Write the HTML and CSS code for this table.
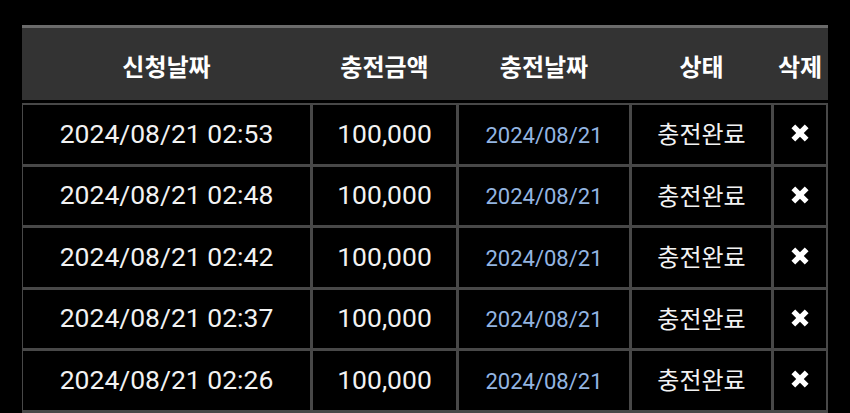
FILE: index.html
```html
<!DOCTYPE html>
<html lang="ko">

<head>
  <meta charset="UTF-8">
  <title>충전내역</title>
  <link rel="stylesheet" href="styles.css">
</head>

<body>
  <div class="history">
    <div class="cols head">
      <div>신청날짜</div>
      <div>충전금액</div>
      <div>충전날짜</div>
      <div>상태</div>
      <div>삭제</div>
    </div>

    <div class="list">
      <div class="cols row">
        <div>2024/08/21 02:53</div>
        <div>100,000</div>
        <div class="done-date">2024/08/21</div>
        <div class="state">충전완료</div>
        <div class="del"><svg viewBox="0 0 18 18"><path d="M3 3L15 15M15 3L3 15" /></svg></div>
      </div>
      <div class="cols row">
        <div>2024/08/21 02:48</div>
        <div>100,000</div>
        <div class="done-date">2024/08/21</div>
        <div class="state">충전완료</div>
        <div class="del"><svg viewBox="0 0 18 18"><path d="M3 3L15 15M15 3L3 15" /></svg></div>
      </div>
      <div class="cols row">
        <div>2024/08/21 02:42</div>
        <div>100,000</div>
        <div class="done-date">2024/08/21</div>
        <div class="state">충전완료</div>
        <div class="del"><svg viewBox="0 0 18 18"><path d="M3 3L15 15M15 3L3 15" /></svg></div>
      </div>
      <div class="cols row">
        <div>2024/08/21 02:37</div>
        <div>100,000</div>
        <div class="done-date">2024/08/21</div>
        <div class="state">충전완료</div>
        <div class="del"><svg viewBox="0 0 18 18"><path d="M3 3L15 15M15 3L3 15" /></svg></div>
      </div>
      <div class="cols row">
        <div>2024/08/21 02:26</div>
        <div>100,000</div>
        <div class="done-date">2024/08/21</div>
        <div class="state">충전완료</div>
        <div class="del"><svg viewBox="0 0 18 18"><path d="M3 3L15 15M15 3L3 15" /></svg></div>
      </div>
    </div>
  </div>
</body>

</html>
```
FILE: styles.css
```css
html {
  overflow: hidden;
  background: #000;
}

body {
  margin: 0;
  background: #000;
  color: #f2f2f2;
  font-family: Roboto, "Noto Sans CJK KR", sans-serif;
}

.history {
  width: 806px;
  margin: 25px 0 0 22px;
}

/* same columns for the header and every row */
.cols {
  display: grid;
  grid-template-columns: 287px 143px 170px 139px 52px;
  column-gap: 3px;
  padding: 0 2px 0 1px;
}

.head {
  height: 72px;
  border-top: 3px solid #6b6b6b;
  background: #333;
  font-family: "Noto Sans CJK KR", sans-serif;
  font-size: 24px;
  font-weight: 700;
  color: #fff;
}

.head div {
  display: flex;
  align-items: center;
  justify-content: center;
  padding-top: 2px;
}

.list {
  margin-top: 3px;
  padding: 2px 0 3px;
  display: grid;
  row-gap: 3px;
  background: #484848;
}

.row {
  height: 58.5px;
  padding: 0 2px 0 1px;
}

.row div {
  background: #000;
  display: flex;
  align-items: center;
  justify-content: center;
  font-size: 26.5px;
  padding-bottom: 2px;
}

.row .done-date {
  font-size: 22px;
  color: #93b5e2;
  padding: 2px 0 0;
}

.row .state {
  font-family: "Noto Sans CJK KR", sans-serif;
  font-size: 24px;
  padding-bottom: 3px;
}

.del svg {
  width: 20px;
  height: 20px;
  fill: none;
  stroke: #fff;
  stroke-width: 4.8;
}
```
